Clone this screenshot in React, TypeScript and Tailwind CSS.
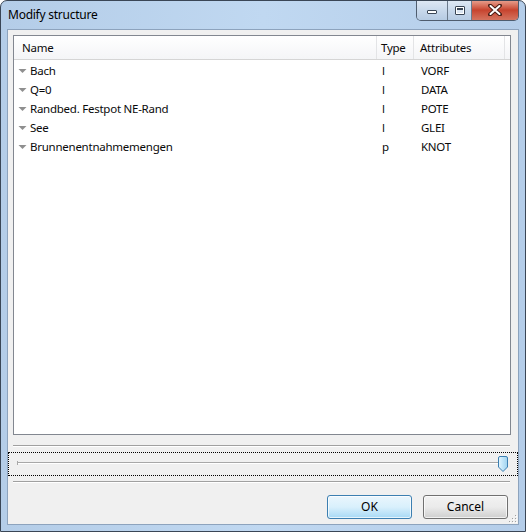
import React from "react";

const rows = [
  { name: "Bach", type: "l", attr: "VORF" },
  { name: "Q=0", type: "l", attr: "DATA" },
  { name: "Randbed. Festpot NE-Rand", type: "l", attr: "POTE" },
  { name: "See", type: "l", attr: "GLEI" },
  { name: "Brunnenentnahmemengen", type: "p", attr: "KNOT" },
];

function Tri() {
  return (
    <svg width="9" height="6" viewBox="0 0 9 6" className="mr-[3px] shrink-0">
      <path d="M0.5 1 L8.5 1 L4.5 5 Z" fill="#8f8f8f" />
    </svg>
  );
}

export default function App() {
  return (
    <div
      className="relative flex h-[532px] w-[526px] flex-col overflow-hidden rounded-t-[7px] border border-[#3a4656] bg-gradient-to-r from-[#b4cde8] via-[#c0d8f1] to-[#b4cde9] text-[11.5px] tracking-[-0.25px] text-[#0a0a0a]"
      style={{ fontFamily: '"Segoe UI", "Noto Sans", "Open Sans", sans-serif' }}
    >
      {/* title bar */}
      <div className="flex h-[28px] shrink-0 items-center pl-[7px] pb-[1px]">
        <span className="text-[12px] text-black">Modify structure</span>
      </div>

      {/* caption buttons */}
      <div className="absolute right-[6px] top-[-1px] flex h-[21px] overflow-hidden rounded-b-[5px] border border-t-0 border-[#4f5d6f]">
        <div className="flex w-[31px] items-center justify-center border-r border-[#6b7a8c] bg-gradient-to-b from-[#dfe9f5] via-[#c9d9ec] to-[#b6cbe3]">
          <div className="mt-[4px] h-[4px] w-[10px] rounded-[1px] border border-[#3a4656] bg-white" />
        </div>
        <div className="flex w-[24px] items-center justify-center border-r border-[#6b7a8c] bg-gradient-to-b from-[#dfe9f5] via-[#c9d9ec] to-[#b6cbe3]">
          <div className="h-[9px] w-[10px] rounded-[1px] border border-[#3a4656] bg-white p-[1px]">
            <div className="h-full w-full border-t-2 border-[#3a4656] bg-[#dce6f2]" />
          </div>
        </div>
        <div className="flex w-[46px] items-center justify-center bg-gradient-to-b from-[#e8a493] via-[#c7432e] to-[#d4735f]">
          <svg width="14" height="12" viewBox="0 0 14 12">
            <path d="M2 1.5 L12 10.5 M12 1.5 L2 10.5" stroke="#4a1e16" strokeWidth="4" strokeLinecap="round" />
            <path d="M2.5 2 L11.5 10 M11.5 2 L2.5 10" stroke="#ffffff" strokeWidth="2" strokeLinecap="round" />
          </svg>
        </div>
      </div>

      {/* client area */}
      <div className="mx-[6px] mb-[6px] flex flex-1 flex-col border border-[#8da3bd] bg-[#f0f0f0]">
        <div className="pl-[5px] pr-[7px] pt-[5px]">
          {/* table */}
          <div className="h-[400px] border border-[#828790] bg-white">
            <div className="flex h-[24px] items-center border-b border-[#d5d5d5] bg-gradient-to-b from-[#ffffff] to-[#f4f5f7]">
              <div className="flex h-full w-[363px] items-center border-r border-[#e3e4e6] pl-[8px]">Name</div>
              <div className="flex h-full w-[37px] items-center border-r border-[#e3e4e6] pl-[4px]">Type</div>
              <div className="flex h-full w-[91px] items-center border-r border-[#e3e4e6] pl-[6px]">Attributes</div>
            </div>
            <div className="pt-[1px]">
              {rows.map((r) => (
                <div key={r.name} className="flex h-[19px] items-center">
                  <div className="flex w-[364px] items-center pl-[4px]">
                    <Tri />
                    <span>{r.name}</span>
                  </div>
                  <div className="w-[37px] pl-[4px]">{r.type}</div>
                  <div className="pl-[6px]">{r.attr}</div>
                </div>
              ))}
            </div>
          </div>
        </div>

        {/* separator */}
        <div className="ml-[5px] mr-[8px] mt-[10px] h-[2px] border-t border-[#a0a0a0] border-b-white border-b" />

        {/* slider */}
        <div className="mt-[5px] flex h-[24px] items-center border border-dotted border-black pl-[8px] pr-[8px]">
          <div className="relative h-[16px] flex-1">
            <div className="absolute left-0 right-[4px] top-[6px] h-[2px] border-t border-[#a8a8a8] border-b border-b-white" />
            <div className="absolute left-0 top-[5px] h-[4px] w-[1px] bg-[#a8a8a8]" />
            <svg className="absolute right-0 top-0" width="12" height="16" viewBox="0 0 12 16">
              <defs>
                <linearGradient id="thumb" x1="0" x2="1" y1="0" y2="0">
                  <stop offset="0" stopColor="#e6f5fd" />
                  <stop offset="0.5" stopColor="#bfe4f8" />
                  <stop offset="1" stopColor="#9fd2ef" />
                </linearGradient>
              </defs>
              <path d="M1.5 2 Q1.5 0.5 3 0.5 L9 0.5 Q10.5 0.5 10.5 2 L10.5 11 L6 15.5 L1.5 11 Z" fill="url(#thumb)" stroke="#3c7fb1" strokeWidth="1" />
            </svg>
          </div>
        </div>

        {/* separator */}
        <div className="ml-[5px] mr-[8px] mt-[5px] h-[2px] border-t border-[#a0a0a0] border-b-white border-b" />

        {/* buttons */}
        <div className="relative flex flex-1 items-start justify-end gap-[11px] pr-[10px] pt-[12px]">
          <button className="h-[24px] w-[85px] rounded-[3px] border border-[#3c7fb1] bg-gradient-to-b from-[#eaf6fd] via-[#d9f0fc] to-[#a7d9f5] text-[12px] tracking-normal text-black shadow-[inset_0_0_0_1px_rgba(255,255,255,0.7)]">
            OK
          </button>
          <button className="h-[24px] w-[85px] rounded-[3px] border border-[#707070] bg-gradient-to-b from-[#f2f2f2] via-[#ebebeb] to-[#cfcfcf] text-[12px] tracking-normal text-black shadow-[inset_0_0_0_1px_rgba(255,255,255,0.7)]">
            Cancel
          </button>
          <svg className="absolute bottom-[1px] right-[1px]" width="10" height="10" viewBox="0 0 10 10">
            {[
              [8, 2],
              [5, 5],
              [8, 5],
              [2, 8],
              [5, 8],
              [8, 8],
            ].map(([x, y]) => (
              <g key={`${x}-${y}`}>
                <rect x={x + 1} y={y + 1} width="1" height="1" fill="#ffffff" />
                <rect x={x} y={y} width="1" height="1" fill="#a0a0a0" />
              </g>
            ))}
          </svg>
        </div>
      </div>
    </div>
  );
}
